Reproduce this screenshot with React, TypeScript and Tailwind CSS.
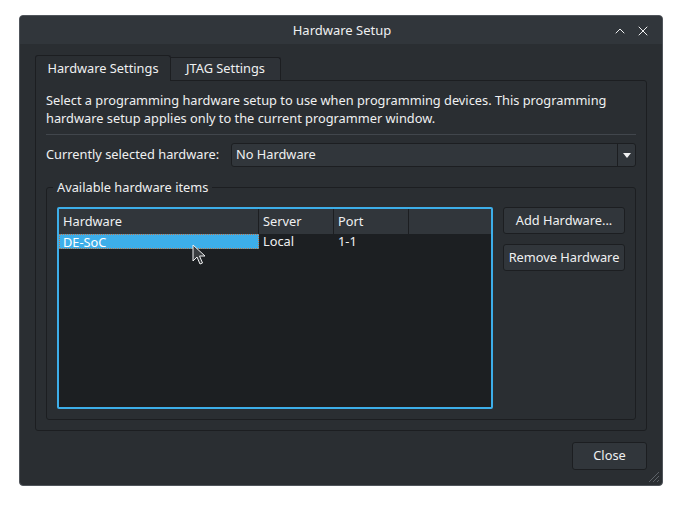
import React from 'react';
import { ChevronUp, X } from 'lucide-react';

const font = { fontFamily: '"Noto Sans", "Open Sans", sans-serif' };

const App = () => {
  const columns = [
    { label: 'Hardware', w: 'w-[200px]' },
    { label: 'Server', w: 'w-[75px]' },
    { label: 'Port', w: 'w-[75px]' }
  ];

  return (
    <div className="w-[682px] h-[509px] bg-white pl-[19px] pt-[15px]" style={font}>
      <div className="relative w-[644px] h-[471px] bg-[#2a2e32] border border-[#50555b] rounded-[4px] flex flex-col text-[12.8px] text-[#eff0f1]">
        {/* title bar */}
        <div className="h-[29px] bg-[#31363b] rounded-t-[4px] flex items-center relative">
          <div className="flex-1 text-center text-[13px] leading-none pl-[2px]">Hardware Setup</div>
          <div className="absolute right-[11px] top-[7px] flex items-center gap-[7px]">
            <ChevronUp className="w-[16px] h-[16px]" strokeWidth={1.5} />
            <X className="w-[16px] h-[16px]" strokeWidth={1.5} />
          </div>
        </div>

        <div className="flex-1 px-[15px] pt-[10px] pb-[15px] flex flex-col">
          {/* tabs */}
          <div className="flex items-end h-[26px]">
            <div className="h-[26px] w-[136px] border border-b-0 border-[#1c1e21] rounded-t-[3px] bg-[#2a2e32] flex items-center justify-center -mb-px relative z-10">
              Hardware Settings
            </div>
            <div className="h-[23px] w-[110px] border border-b-0 border-l-0 border-[#1c1e21] rounded-tr-[3px] bg-[#2e3237] flex items-center justify-center">
              JTAG Settings
            </div>
          </div>

          {/* panel */}
          <div className="h-[351px] border border-[#1c1e21] rounded-b-[3px] rounded-tr-[3px] px-[10px] pt-[10px] flex flex-col">
            <p className="leading-[18px]">
              Select a programming hardware setup to use when programming devices. This programming hardware setup applies only to the current programmer window.
            </p>
            <div className="h-px bg-[#41464c] mt-[7px]" />
            <div className="flex items-center mt-[8px] h-[24px]">
              <span className="w-[185px]">Currently selected hardware:</span>
              <div className="flex-1 h-[24px] bg-[#31363b] border border-[#1c1e21] rounded-[3px] flex items-center">
                <span className="flex-1 pl-[4px]">No Hardware</span>
                <div className="w-[18px] h-full border-l border-[#1c1e21] flex items-center justify-center">
                  <svg width="8" height="5" viewBox="0 0 8 5"><path d="M0 0h8L4 5z" fill="#eff0f1" /></svg>
                </div>
              </div>
            </div>

            {/* group box */}
            <div className="relative mt-[20px] h-[233px] border border-[#1c1e21] rounded-[3px] px-[10px] pt-[19px] pb-[10px] flex gap-[10px]">
              <span className="absolute -top-[10px] left-[6px] px-[4px] bg-[#2a2e32] leading-[18px]">Available hardware items</span>
              <div className="w-[436px] h-[202px] border-2 border-[#3daee9] rounded-[2px] bg-[#1c1f22] flex flex-col">
                <div className="flex h-[25px] bg-[#31363b]">
                  {columns.map((c) => (
                    <div key={c.label} className={`${c.w} border-r border-[#1c1e21] pl-[4px] flex items-center`}>
                      {c.label}
                    </div>
                  ))}
                  <div className="flex-1" />
                </div>
                <div className="flex h-[15px] leading-[15px]">
                  <div className="w-[200px] bg-[#3daee9] border border-dotted border-[#b8744a] pl-[3px] text-white">DE-SoC</div>
                  <div className="w-[75px] pl-[4px]">Local</div>
                  <div className="w-[75px] pl-[4px]">1-1</div>
                </div>
              </div>
              <div className="flex flex-col gap-[10px]">
                <button className="w-[122px] h-[27px] bg-[#31363b] border border-[#1c1e21] rounded-[3px]">Add Hardware...</button>
                <button className="w-[122px] h-[27px] bg-[#31363b] border border-[#1c1e21] rounded-[3px]">Remove Hardware</button>
              </div>
            </div>
          </div>

          <div className="flex justify-end mt-[11px]">
            <button className="w-[75px] h-[28px] bg-[#31363b] border border-[#1c1e21] rounded-[3px]">Close</button>
          </div>
        </div>

        {/* resize grip */}
        <svg className="absolute right-[2px] bottom-[2px]" width="14" height="14" viewBox="0 0 14 14">
          <path d="M13 3L3 13M13 7L7 13M13 11L11 13" stroke="#5d6268" strokeWidth="1" />
        </svg>

        {/* mouse cursor */}
        <svg className="absolute left-[172px] top-[228px]" width="16" height="22" viewBox="0 0 16 22">
          <path d="M1 1L1 17L5 13L8 20L10.5 19L7.5 12L13 12Z" fill="#3a3d40" stroke="#eff0f1" strokeWidth="1" strokeLinejoin="round" />
        </svg>
      </div>
    </div>
  );
};

export default App;
